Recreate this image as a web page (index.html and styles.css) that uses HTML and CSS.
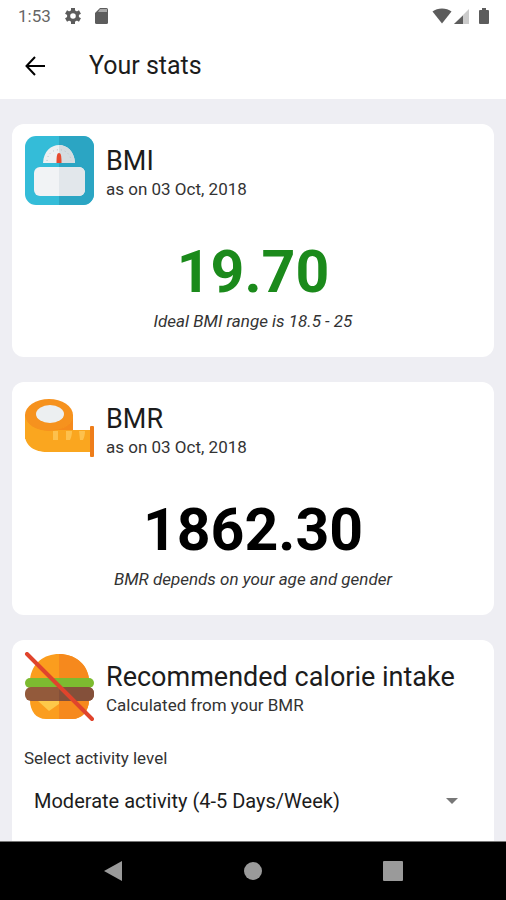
FILE: index.html
```html
<!DOCTYPE html>
<html lang="en">
<head>
    <meta charset="UTF-8">
    <meta name="viewport" content="width=device-width, initial-scale=1.0">
    <title>Your stats</title>
    <link rel="stylesheet" href="styles.css">
</head>
<body>
    <div class="status-bar">
        <div class="status-group">
            <span class="clock">1:53</span>
            <svg class="status-settings" width="16" height="16" viewBox="2 2 20 20" aria-hidden="true">
                <g stroke="#5c5c5c" stroke-width="5">
                    <path d="M12 2v20M3.300 7l17.400 10M3.300 17L20.700 7"/>
                </g>
                <circle cx="12" cy="12" r="5.500" fill="#fff" stroke="#5c5c5c" stroke-width="4"/>
            </svg>
            <svg width="13" height="16" viewBox="0 0 13 16" aria-hidden="true">
                <path fill="#5c5c5c" d="M5 0h6.500A1.500 1.500 0 0 1 13 1.500v13a1.500 1.500 0 0 1-1.500 1.500h-10A1.500 1.500 0 0 1 0 14.500V5z"/>
                <path fill="#a8a8a8" d="M5 1h7v3H3z"/>
            </svg>
        </div>
        <div class="status-group status-right">
            <svg width="20" height="16" viewBox="0 0 20 16" aria-hidden="true">
                <path fill="#5c5c5c" d="M10 15.500L.5 3.500C5.500-.5 14.500-.5 19.500 3.500z"/>
            </svg>
            <svg class="status-signal" width="15" height="16" viewBox="0 0 15 16" aria-hidden="true">
                <path fill="#cbcbcb" d="M15 1v15H0z"/>
                <path fill="#5c5c5c" d="M9 7.400V16H0z"/>
            </svg>
            <svg width="10" height="16" viewBox="0 0 10 16" aria-hidden="true">
                <path fill="#5c5c5c" d="M3 0h4v2h2a1 1 0 0 1 1 1v12a1 1 0 0 1-1 1H1a1 1 0 0 1-1-1V3a1 1 0 0 1 1-1h2z"/>
            </svg>
        </div>
    </div>

    <header class="app-bar">
        <button class="back-btn" type="button" aria-label="Back">
            <svg width="20" height="20" viewBox="0 0 20 20" fill="none" stroke="#000" stroke-width="2">
                <path d="M10 1L1.500 10l8.500 9M2 10h18"/>
            </svg>
        </button>
        <h1>Your stats</h1>
    </header>

    <main class="content">
        <section class="card">
            <div class="card-header">
                <svg class="card-icon" viewBox="0 0 70 70" aria-hidden="true">
                    <rect x="1" width="69" height="69" rx="11" fill="#34bcd8"/>
                    <path fill="#2ba5c3" d="M35 0h24a11 11 0 0 1 11 11v47a11 11 0 0 1-11 11H35z"/>
                    <path fill="#eceff1" d="M19 27C20 3 50 3 51 27z"/>
                    <path fill="#d5dce0" d="M35 9C43 9 50 15 51 27H35z"/>
                    <path fill="none" stroke="#b9c4c9" stroke-dasharray="1 3" d="M23 25c1-15 23-15 24 0"/>
                    <path fill="#e64a2e" d="M35 17c2 0 2.500 3 2.500 10h-5c0-7 .5-10 2.500-10z"/>
                    <rect x="10" y="31" width="51" height="29" rx="6" fill="#f1f3f5"/>
                    <path fill="#e2e7eb" d="M35 31h20a6 6 0 0 1 6 6v17a6 6 0 0 1-6 6H35z"/>
                </svg>
                <div class="card-title">
                    <h2>BMI</h2>
                    <p class="subtitle">as on 03 Oct, 2018</p>
                </div>
            </div>
            <p class="value good">19.70</p>
            <p class="note">Ideal BMI range is 18.5 - 25</p>
        </section>

        <section class="card">
            <div class="card-header">
                <svg class="card-icon" viewBox="0 0 70 70" aria-hidden="true">
                    <path fill="#faa61f" d="M1 21h48v15h18v22H23C11 58 1 52 1 41z"/>
                    <ellipse cx="25" cy="21" rx="24" ry="16" fill="#f6921e"/>
                    <path fill="#faa61f" d="M1 21c0 9 11 16 24 16v8H1z"/>
                    <path fill="#f58a1c" d="M49 21v15H28c11 0 21-6 21-15z"/>
                    <ellipse cx="26" cy="20" rx="14" ry="9" fill="#eceff1"/>
                    <path fill="#fdc14d" d="M29 37h5v9h-5zM42 37h6c0 4-1 7-2 9h-4zM55 37h6c0 4-1 7-2 9h-3z"/>
                    <rect x="66" y="32" width="4" height="31" rx="1" fill="#ee7d1a"/>
                </svg>
                <div class="card-title">
                    <h2>BMR</h2>
                    <p class="subtitle">as on 03 Oct, 2018</p>
                </div>
            </div>
            <p class="value">1862.30</p>
            <p class="note">BMR depends on your age and gender</p>
        </section>

        <section class="card">
            <div class="card-header">
                <svg class="card-icon" viewBox="0 0 70 70" aria-hidden="true">
                    <path fill="#fb9d1e" d="M6 27C8 11 20 2 35 2s28 9 30 25z"/>
                    <path fill="#f6891d" d="M35 2c15 0 28 9 30 25H35z"/>
                    <path fill="#fb9d1e" d="M6 48h59c0 11-7 19-17 19H22C12 67 6 59 6 48z"/>
                    <path fill="#f6891d" d="M35 48h30c0 11-7 19-17 19H35z"/>
                    <rect x="1" y="26" width="69" height="10" rx="5" fill="#7dbb30"/>
                    <rect x="1" y="35" width="69" height="14" rx="6" fill="#935a3b"/>
                    <path fill="#84503a" d="M35 35h29a6 6 0 0 1 6 6v2a6 6 0 0 1-6 6H35z"/>
                    <path fill="#fdc94a" d="M14 49h21v3l-10 7z"/>
                    <path stroke="#e0442c" stroke-width="4" stroke-linecap="round" d="M3 2l65 65"/>
                </svg>
                <div class="card-title">
                    <h2>Recommended calorie intake</h2>
                    <p class="subtitle">Calculated from your BMR</p>
                </div>
            </div>
            <label class="field-label" for="activity">Select activity level</label>
            <div class="select-wrap">
                <select id="activity">
                    <option selected>Moderate activity (4-5 Days/Week)</option>
                </select>
                <svg class="select-arrow" width="12" height="6" viewBox="0 0 12 6" fill="#777" aria-hidden="true">
                    <path d="M0 0h12L6 6z"/>
                </svg>
            </div>
        </section>
    </main>

    <nav class="nav-bar">
        <button type="button" aria-label="Back">
            <svg width="20" height="20" viewBox="0 0 20 20" fill="#9a9a9a"><path d="M19 0v20L1 10z"/></svg>
        </button>
        <button type="button" aria-label="Home">
            <svg width="20" height="20" viewBox="0 0 20 20" fill="#9a9a9a"><circle cx="10" cy="10" r="9"/></svg>
        </button>
        <button type="button" aria-label="Recent apps">
            <svg width="20" height="20" viewBox="0 0 20 20" fill="#9a9a9a"><rect width="20" height="20" rx="1"/></svg>
        </button>
    </nav>
</body>
</html>
```

FILE: styles.css
```css
* {
    margin: 0;
    padding: 0;
    box-sizing: border-box;
    font-family: Roboto, sans-serif;
}

body {
    height: 100vh;
    display: flex;
    flex-direction: column;
    background: #eeeef3;
    color: #1c1c1c;
}

svg {
    display: block;
    flex-shrink: 0;
}

button {
    background: none;
    border: none;
    cursor: pointer;
}

.status-bar {
    display: flex;
    justify-content: space-between;
    height: 32px;
    padding: 0 17px 0 18px;
    background: #fff;
}

.status-group {
    display: flex;
    align-items: center;
    gap: 14px;
}

.status-right {
    gap: 10px;
}

.status-signal {
    margin-left: -8px;
}

.clock {
    font-size: 17px;
    font-weight: 400;
    color: #666;
}

.app-bar {
    display: flex;
    align-items: center;
    gap: 32px;
    height: 67px;
    padding: 0 13px;
    background: #fff;
}

.back-btn {
    padding: 12px;
}

h1 {
    font-size: 25px;
    font-weight: 400;
}

.content {
    flex: 1;
    min-height: 0;
    overflow: hidden;
    padding: 25px 12px 0;
}

.card {
    background: #fff;
    border-radius: 12px;
    padding: 12px 12px 24px;
    margin-bottom: 25px;
}

.card:last-child {
    padding-bottom: 48px;
}

.card-header {
    display: flex;
    align-items: center;
    gap: 12px;
}

.card-icon {
    width: 70px;
    height: 70px;
}

.card-title {
    padding-top: 4px;
}

h2 {
    font-size: 27px;
    font-weight: 400;
    line-height: 32px;
}

.subtitle,
.note,
.field-label {
    font-size: 17px;
    line-height: 24px;
    color: #333;
}

.value {
    margin-top: 30px;
    margin-bottom: 1px;
    font-size: 59px;
    font-weight: 700;
    line-height: 72px;
    text-align: center;
    color: #000;
}

.value.good {
    color: #1b8a1b;
}

.note {
    font-style: italic;
    text-align: center;
}

.field-label {
    display: block;
    margin-top: 24px;
}

.select-wrap {
    position: relative;
    margin-top: 11px;
}

select {
    width: 100%;
    height: 40px;
    padding: 0 40px 0 10px;
    appearance: none;
    background: none;
    border: none;
    font-size: 20px;
    color: #1c1c1c;
}

.select-arrow {
    position: absolute;
    top: 17px;
    right: 24px;
    pointer-events: none;
}

.nav-bar {
    display: flex;
    justify-content: center;
    gap: 80px;
    height: 59px;
    background: #000;
    border-top: 1px solid #777;
}

.nav-bar button {
    padding: 0 20px;
}
```
